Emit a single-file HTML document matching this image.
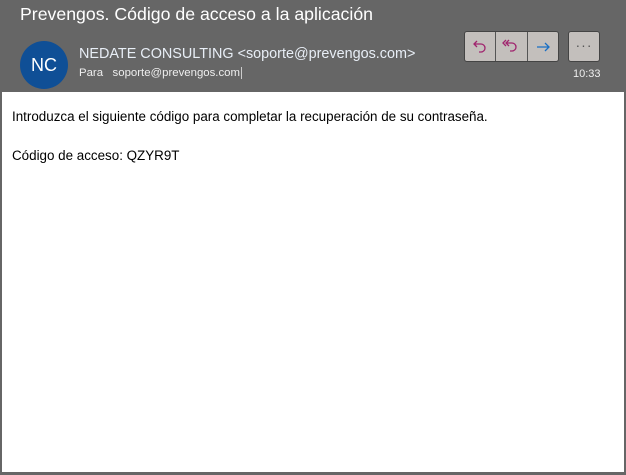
<!DOCTYPE html>
<html><head><meta charset="utf-8"><style>
body{margin:0;width:626px;height:475px;background:#666;position:relative;overflow:hidden;font-family:"Liberation Sans",sans-serif;color:#fff}
.a{position:absolute;white-space:nowrap}
.title{left:20px;top:4px;font-size:17.7px;color:#fff}
.av{left:20px;top:41px;width:48px;height:48px;border-radius:50%;background:#0f4f96;color:#fff;font-size:18px;text-align:center;line-height:48px}
.from{left:79px;top:46px;font-size:14.4px;color:#e8eef6}
.para{left:79px;top:67px;font-size:11.4px;color:#eee}
.btns{left:464px;top:31px;width:95px;height:31px;background:#c3bfbc;border:1px solid #444;border-radius:3px;box-sizing:border-box;display:flex}
.btns div{flex:1;border-right:1px solid #555;display:flex;align-items:center;justify-content:center}
.btns div:last-child{border-right:none}
.more{left:568px;top:31px;width:32px;height:31px;background:#c3bfbc;border:1px solid #444;border-radius:3px;box-sizing:border-box;text-align:center;line-height:26px;color:#555;font-size:14px;letter-spacing:1px}
.time{left:573px;top:68px;font-size:11px;color:#eee}
.panel{left:2px;top:92px;width:622px;height:380px;background:#fff;color:#000;font-size:13.4px}
</style></head><body>
<div class="a title">Prevengos. Código de acceso a la aplicación</div>
<div class="a av">NC</div>
<div class="a from">NEDATE CONSULTING &lt;soporte@prevengos.com&gt;</div>
<div class="a para">Para&nbsp;&nbsp; soporte@prevengos.com<span style="border-left:1px solid #ccc;margin-left:1px"></span></div>
<div class="a btns">
<div><svg width="16" height="16" viewBox="0 0 16 16" fill="none" stroke="#a0246e" stroke-width="1.3"><path d="M5 2L2 5l3 3M2 5h7a4 4 0 0 1 0 8H7"/></svg></div>
<div><svg width="18" height="16" viewBox="0 0 18 16" fill="none" stroke="#a0246e" stroke-width="1.3"><path d="M4 1L1 4l3 3M7 1L4 4l3 3M4 4h6a4 4 0 0 1 0 8H8"/></svg></div>
<div><svg width="16" height="16" viewBox="0 0 16 16" fill="none" stroke="#1a6fc4" stroke-width="1.3"><path d="M2 8h12M10 4l4 4-4 4"/></svg></div>
</div>
<div class="a more">···</div>
<div class="a time">10:33</div>
<div class="a panel">
<div class="a" style="left:10px;top:17px">Introduzca el siguiente código para completar la recuperación de su contraseña.</div>
<div class="a" style="left:10px;top:56px">Código de acceso: QZYR9T</div>
</div>
</body></html>
